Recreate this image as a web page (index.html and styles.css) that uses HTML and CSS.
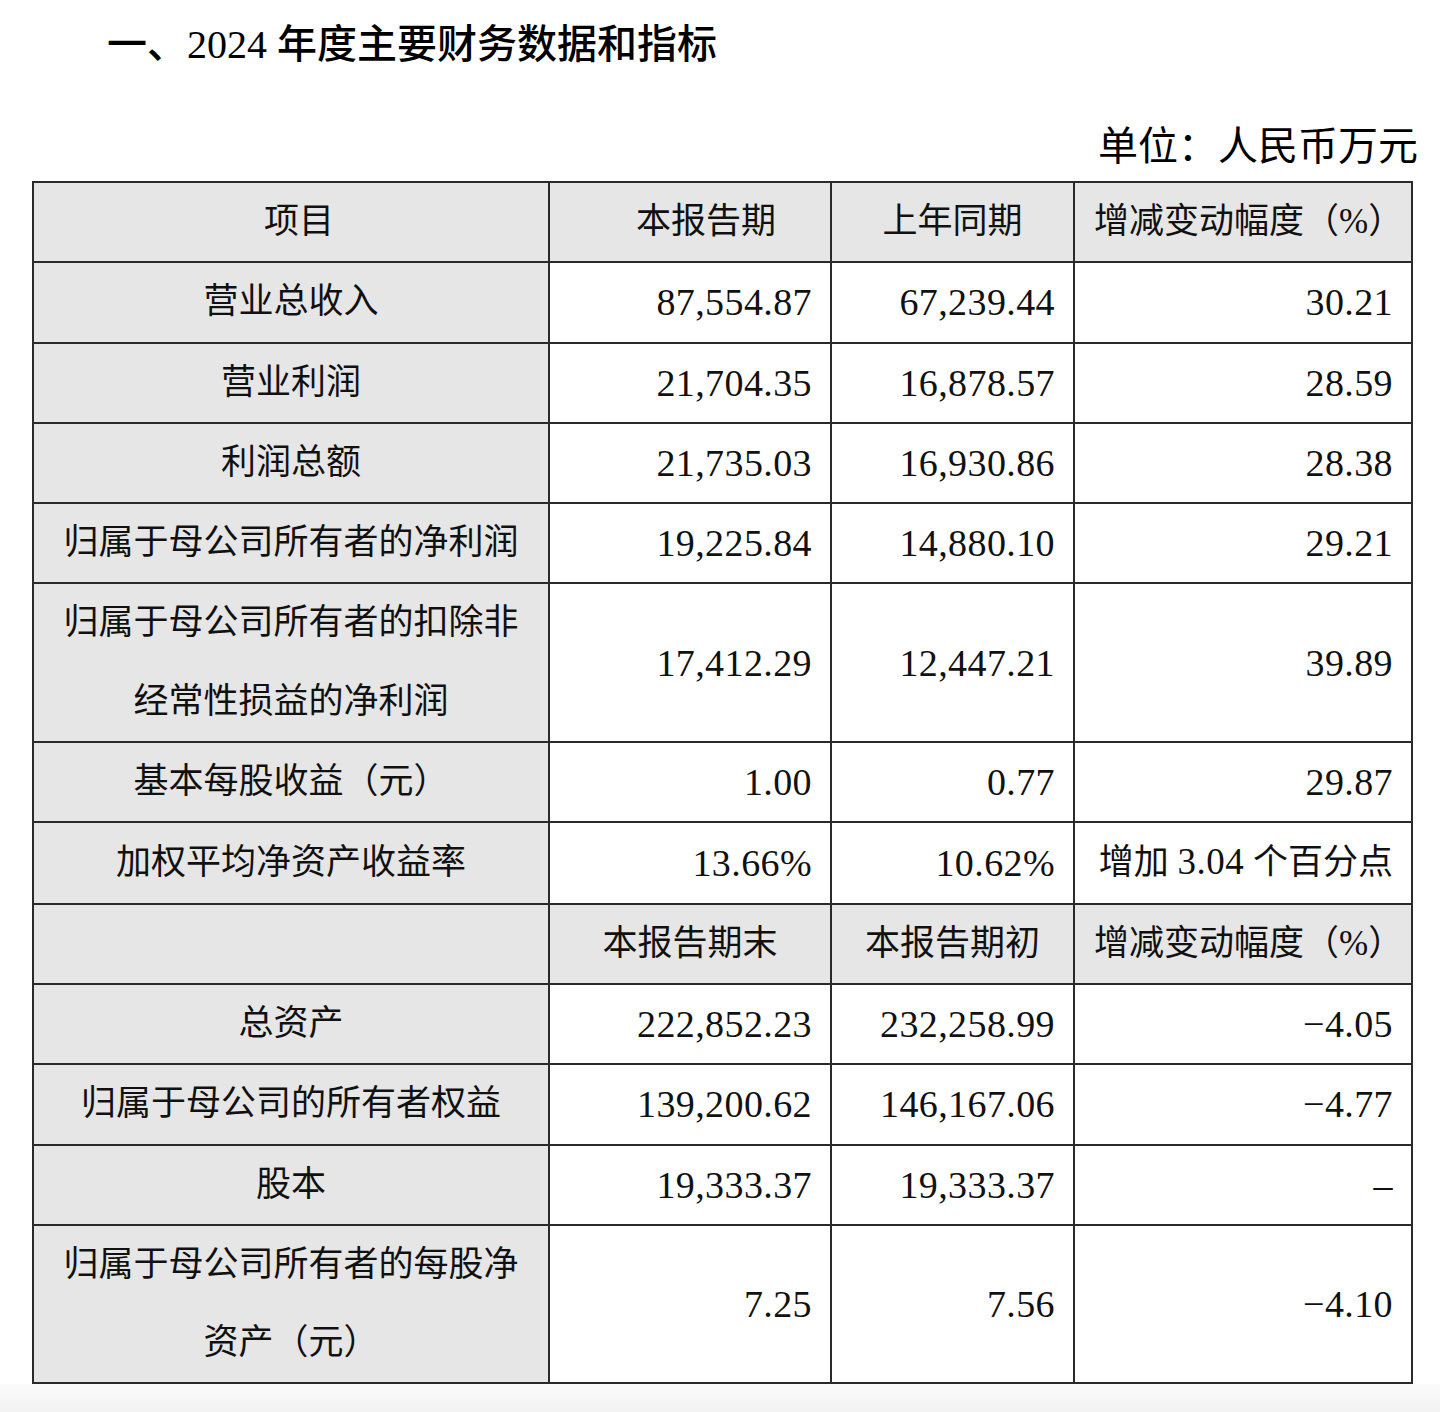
FILE: index.html
```html
<!DOCTYPE html>
<html lang="zh-CN">
<head>
<meta charset="utf-8">
<title>2024年度主要财务数据和指标</title>
<link rel="stylesheet" href="styles.css">
</head>
<body>
<div class="page">
  <h1 class="title">一、2024 年度主要财务数据和指标</h1>
  <div class="unit">单位：人民币万元</div>
  <table class="fin">
    <colgroup>
      <col class="c1"><col class="c2"><col class="c3"><col class="c4">
    </colgroup>
    <tbody>
      <tr class="head">
        <td class="label shift-s">项目</td>
        <td class="shift-l">本报告期</td>
        <td>上年同期</td>
        <td>增减变动幅度（%）</td>
      </tr>
      <tr>
        <td class="label">营业总收入</td>
        <td class="num">87,554.87</td>
        <td class="num">67,239.44</td>
        <td class="num">30.21</td>
      </tr>
      <tr>
        <td class="label">营业利润</td>
        <td class="num">21,704.35</td>
        <td class="num">16,878.57</td>
        <td class="num">28.59</td>
      </tr>
      <tr>
        <td class="label">利润总额</td>
        <td class="num">21,735.03</td>
        <td class="num">16,930.86</td>
        <td class="num">28.38</td>
      </tr>
      <tr>
        <td class="label">归属于母公司所有者的净利润</td>
        <td class="num">19,225.84</td>
        <td class="num">14,880.10</td>
        <td class="num">29.21</td>
      </tr>
      <tr>
        <td class="label">归属于母公司所有者的扣除非经常性损益的净利润</td>
        <td class="num">17,412.29</td>
        <td class="num">12,447.21</td>
        <td class="num">39.89</td>
      </tr>
      <tr>
        <td class="label">基本每股收益（元）</td>
        <td class="num">1.00</td>
        <td class="num">0.77</td>
        <td class="num">29.87</td>
      </tr>
      <tr>
        <td class="label">加权平均净资产收益率</td>
        <td class="num">13.66%</td>
        <td class="num">10.62%</td>
        <td class="num mixed">增加 <span class="d">3.04</span> 个百分点</td>
      </tr>
      <tr class="head">
        <td class="label"></td>
        <td>本报告期末</td>
        <td>本报告期初</td>
        <td>增减变动幅度（%）</td>
      </tr>
      <tr>
        <td class="label">总资产</td>
        <td class="num">222,852.23</td>
        <td class="num">232,258.99</td>
        <td class="num">−4.05</td>
      </tr>
      <tr>
        <td class="label">归属于母公司的所有者权益</td>
        <td class="num">139,200.62</td>
        <td class="num">146,167.06</td>
        <td class="num">−4.77</td>
      </tr>
      <tr>
        <td class="label">股本</td>
        <td class="num">19,333.37</td>
        <td class="num">19,333.37</td>
        <td class="num">–</td>
      </tr>
      <tr>
        <td class="label">归属于母公司所有者的每股净资产（元）</td>
        <td class="num">7.25</td>
        <td class="num">7.56</td>
        <td class="num">−4.10</td>
      </tr>
    </tbody>
  </table>
  <div class="fade"></div>
</div>
</body>
</html>
```

FILE: styles.css
```css
html, body {
  margin: 0;
  padding: 0;
  background: #ffffff;
}

.page {
  width: 1440px;
  height: 1412px;
  overflow: hidden;
  color: #111111;
  font-family: "Liberation Serif", "Noto Sans CJK SC", serif;
}

.title {
  margin: 15px 0 0 0;
  padding-left: 107px;
  font-size: 40px;
  line-height: 60px;
  font-weight: 500;
  color: #000000;
}

.unit {
  margin-top: 42px;
  padding-right: 22px;
  text-align: right;
  font-size: 40px;
  line-height: 60px;
  color: #000000;
}

.fin {
  margin: 4px 0 0 32px;
  width: 1379px;
  border-collapse: collapse;
  table-layout: fixed;
}

.c1 { width: 516px; }
.c2 { width: 282px; }
.c3 { width: 243px; }
.c4 { width: 338px; }

.fin td {
  border: 2px solid #2a2a2a;
  font-size: 35px;
  line-height: 78.3px;
  padding: 0 19px;
  text-align: center;
  vertical-align: middle;
  color: #111111;
}

.fin td.label {
  background: #e6e6e6;
  padding: 0 26px;
}

.fin tr.head td {
  background: #e6e6e6;
}

.fin td.label.shift-s {
  padding-left: 42px;
}

.fin td.shift-l {
  padding-left: 51px;
}

.fin td.num {
  text-align: right;
  font-size: 38px;
  letter-spacing: 0.4px;
  padding-right: 18px;
}

.fin td.num.mixed {
  font-size: 35px;
  letter-spacing: 0;
  padding-left: 0;
  white-space: nowrap;
}

.fin td.num.mixed .d {
  font-size: 37px;
  letter-spacing: 0.5px;
}

.fade {
  height: 30px;
  background: linear-gradient(#fbfbfb, #f2f2f2);
}
```
